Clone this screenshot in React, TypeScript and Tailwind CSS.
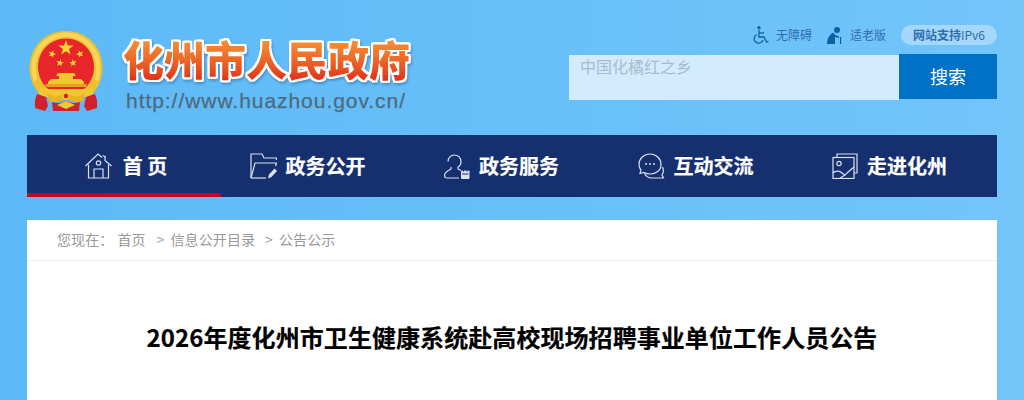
import React from 'react';

const cjk = "font-['Noto_Sans_CJK_SC','Liberation_Sans',sans-serif]";

const Star = ({ cx, cy, r, rot = 0 }: { cx: number; cy: number; r: number; rot?: number }) => {
  const pts: string[] = [];
  for (let i = 0; i < 10; i++) {
    const rad = i % 2 === 0 ? r : r * 0.4;
    const a = ((-90 + rot + i * 36) * Math.PI) / 180;
    pts.push(`${(cx + rad * Math.cos(a)).toFixed(2)},${(cy + rad * Math.sin(a)).toFixed(2)}`);
  }
  return <polygon points={pts.join(' ')} fill="#fbd530" />;
};

const Emblem = () => (
  <svg width="76" height="82" viewBox="0 0 76 82" className="shrink-0">
    <path d="M38 1C17 1 1.500 17 1.500 38c0 10 4 19 10 26l8 3h37l8-3c6-7 10-16 10-26C74.500 17 59 1 38 1z" fill="#efc02d" />
    <path d="M38 2.500C19 2.500 3.500 18 3.500 38c0 6 1 10 3 14l3-3C8.500 46 8 42 8 38 8 21 21 7 38 7s30 14 30 31c0 4-.5 8-1.500 11l3 3c2-4 3-8 3-14C72.500 18 57 2.500 38 2.500z" fill="#f6d65a" />
    <path d="M38 8.500C22 8.500 10 21 10 37c0 9 4 17 10 22h36c6-5 10-13 10-22C66 21 54 8.500 38 8.500z" fill="#e8262a" />
    <Star cx={38} cy={18} r={8} />
    <Star cx={24} cy={24} r={4} rot={20} />
    <Star cx={52} cy={24} r={4} rot={-20} />
    <Star cx={32} cy={33} r={4} rot={10} />
    <Star cx={45} cy={33} r={4} rot={-10} />
    <path d="M30 43h16l2 3h-3v3h8l3 3v2H20v-2l3-3h8v-3h-3z" fill="#f4c72f" />
    <path d="M17 54h42l-1 3H18z" fill="#e2a51d" />
    <path d="M12 58c8 2 44 2 52 0l2 5-4 3-5 1H19l-5-1-4-3z" fill="#f2c733" />
    <path d="M9 64l9 3 2 9-3 5-10-3V70z" fill="#d2212a" />
    <path d="M67 64l-9 3-2 9 3 5 10-3V70z" fill="#d2212a" />
    <path d="M19 63c5 3 8 4 11 3l8-3 8 3c3 1 6 0 11-3l-2 8c-5 2-9 1-12 0l-5-2-5 2c-3 1-7 2-12 0z" fill="#e8b424" />
    <path d="M24 72c5 2 9 1 14-1 5 2 9 3 14 1l-1 9H25z" fill="#d2212a" />
    <path d="M29 75l9-4 9 4-9 4z" fill="#f2c733" />
    <circle cx="38" cy="66" r="3" fill="#d2212a" stroke="#f2c733" strokeWidth="1.500" />
  </svg>
);

const HomeIcon = () => (
  <svg width="27" height="26" viewBox="0 0 27 26" fill="none" stroke="#d9e1f2" strokeWidth="1.200">
    <path d="M.5 13 13 1l4 3.500M20 4v3.500l6.500 5.500" />
    <path d="M3.500 11.500V25h20V11.500" />
    <circle cx="13.500" cy="10" r="2.200" />
    <path d="M9 25v-9h9v9" />
    <path d="M17.500 2.500 21 4" />
  </svg>
);

const FolderIcon = () => (
  <svg width="27" height="26" viewBox="0 0 27 26" fill="none" stroke="#d9e1f2" strokeWidth="1.200">
    <path d="M1 25V1h11l2 4h12.500v2" />
    <path d="M1 25 5 10h21.500l-1 3" />
    <path d="M1 25h15" />
    <path d="M18 25.500l1-4 5.500-6 2.500 2.500-5.500 6z" fill="#d9e1f2" stroke="none" />
  </svg>
);

const UserIcon = () => (
  <svg width="26" height="25" viewBox="0 0 26 25" fill="none" stroke="#d9e1f2" strokeWidth="1.200">
    <path d="M4 7.500a6.500 6.500 0 1 1 13 0c0 2.500-1 4.500-3 5.500v2c1 .5 2 1 3 1.500" />
    <path d="M7 13v2c-3 1.500-6.500 3.500-6.500 6.500 0 1.500 1 2.500 2.500 2.500h12" />
    <rect x="17" y="16.500" width="8.500" height="8.500" rx="1" fill="#d9e1f2" stroke="none" />
    <path d="M18 20h6.500M19.500 15v2.500M23 15v2.500" stroke="#152f6f" />
  </svg>
);

const ChatIcon = () => (
  <svg width="27" height="26" viewBox="0 0 27 26" fill="none" stroke="#d9e1f2" strokeWidth="1.200">
    <path d="M3 17C1.500 15.500 1 13.500 1 11.500 1 5.500 6 1 12 1s11 4.500 11 10.500S18 21 12 21c-2 0-4-.5-6-1.500L2 20.500z" />
    <path d="M6.500 20.500C8 23.500 11 25 14 25h11.500l-1.500-3c1.500-2 1.800-5 .5-8" />
    <circle cx="8" cy="11" r="1" fill="#d9e1f2" stroke="none" />
    <circle cx="12" cy="11" r="1" fill="#d9e1f2" stroke="none" />
    <circle cx="16" cy="11" r="1" fill="#d9e1f2" stroke="none" />
  </svg>
);

const PhotoIcon = () => (
  <svg width="26" height="26" viewBox="0 0 26 26" fill="none" stroke="#d9e1f2" strokeWidth="1.200">
    <path d="M5 4.500V1h20v19h-3" />
    <rect x="1" y="4.500" width="21" height="21" />
    <circle cx="7" cy="10.500" r="2.200" />
    <path d="M1 20c3-3 7-2 9 0s4 2 5 0l7-6M8 25.500c2-2 4-3 6-4" />
  </svg>
);

const Wheelchair = () => (
  <svg width="16" height="18" viewBox="0 0 16 18" fill="none" stroke="#14629f" strokeWidth="1.300">
    <circle cx="6" cy="1.800" r="1.700" fill="#14629f" stroke="none" />
    <path d="M6 4v7h5l2.500 5 2-.7" />
    <path d="M6 7h5" />
    <path d="M4 8.500a4.500 4.500 0 1 0 6 5.500" />
  </svg>
);

const Elder = () => (
  <svg width="15" height="17" viewBox="0 0 15 17" fill="#0f5fa3">
    <circle cx="10" cy="3" r="3" />
    <path d="M6 5.500 8.500 8 12 9.500V11L8 10 8 17H0c0-5 2-9 6-11.500z" />
    <path d="M13 10h1.200v7H13z" />
  </svg>
);

const navItems = [
  { label: '首 页', icon: <HomeIcon />, cls: 'pl-[4px] gap-[11px] border-b-[#c00a1a]' },
  { label: '政务公开', icon: <FolderIcon />, cls: 'pr-[21px] gap-[9px]' },
  { label: '政务服务', icon: <UserIcon />, cls: 'pr-[21px] gap-[9px]' },
  { label: '互动交流', icon: <ChatIcon />, cls: 'pr-[21px] gap-[9px]' },
  { label: '走进化州', icon: <PhotoIcon />, cls: 'pr-[21px] gap-[9px]' },
];

export default function App() {
  return (
    <div className={`${cjk} h-[400px] w-[1024px] overflow-hidden bg-gradient-to-r from-[#5cb9f6] to-[#73c5fa] px-[27px]`}>
      {/* header */}
      <div className="flex h-[135px] justify-between">
        <div className="flex pl-[1px] pt-[30px]">
          <Emblem />
          <div className="ml-[19px] pt-[2px]">
            <h1 className="bg-gradient-to-b from-[#f9a13c] to-[#dd1f17] bg-clip-text text-[41px] leading-[52px] font-black text-transparent [filter:drop-shadow(2px_0_0_#fff)_drop-shadow(-2px_0_0_#fff)_drop-shadow(0_2px_0_#fff)_drop-shadow(0_-2px_0_#fff)_drop-shadow(1px_2px_1px_#4a90c8)]">
              化州市人民政府
            </h1>
            <p className="mt-[5px] pl-[3px] font-['Liberation_Sans',sans-serif] text-[21px] leading-[24px] tracking-[0.95px] text-[#4e6a80] [-webkit-text-stroke:0.25px_#4e6a80]">
              http://www.huazhou.gov.cn/
            </p>
          </div>
        </div>
        <div className="flex w-[428px] flex-col items-end">
          <div className="mt-[25px] flex h-[20px] items-center text-[12px] text-[#2f6db0]">
            <Wheelchair />
            <span className="ml-[7px]">无障碍</span>
            <span className="ml-[15px]"><Elder /></span>
            <span className="ml-[8px]">适老版</span>
            <span className="ml-[15px] flex h-[20px] w-[96px] items-center justify-center rounded-full bg-[#a5d7fb] text-[#2f6db0]">
              <b className="font-bold">网站支持</b>IPv6
            </span>
          </div>
          <div className="mt-[9px] flex w-full items-start">
            <div className="mt-[1px] h-[45px] flex-1 bg-[#d2ebfd] pl-[11px] text-[16px] leading-[22px] text-[#a9bccb]">
              中国化橘红之乡
            </div>
            <button className="flex h-[45px] w-[98px] items-center justify-center bg-[#0071c5] text-[18px] text-white">
              搜索
            </button>
          </div>
        </div>
      </div>

      {/* nav */}
      <nav className="flex h-[62px] bg-[#152f6f]">
        {navItems.map((item) => (
          <a
            key={item.label}
            className={`flex w-[194px] items-center justify-center border-y-4 border-transparent text-[20px] font-bold text-white [-webkit-text-stroke:0.2px_#fff] ${item.cls}`}
          >
            {item.icon}
            <span className="whitespace-pre">{item.label}</span>
          </a>
        ))}
      </nav>

      {/* content */}
      <div className="mt-[23px] h-[200px] bg-white">
        <div className="flex h-[41px] items-center border-b border-[#f0f0f0] pb-[2px] pl-[30px] text-[14px] tracking-[0.1px] text-[#999]">
          <span>您现在：</span>
          <span className="ml-[4px]">首页</span>
          <span className="ml-[11px]">&gt;</span>
          <span className="ml-[6px]">信息公开目录</span>
          <span className="ml-[10px]">&gt;</span>
          <span className="ml-[6px]">公告公示</span>
        </div>
        <h2 className="mt-[59px] text-center text-[24px] leading-[34px] font-bold tracking-[0.07px] text-black [-webkit-text-stroke:0.2px_#000]">
          2026年度化州市卫生健康系统赴高校现场招聘事业单位工作人员公告
        </h2>
      </div>
    </div>
  );
}
